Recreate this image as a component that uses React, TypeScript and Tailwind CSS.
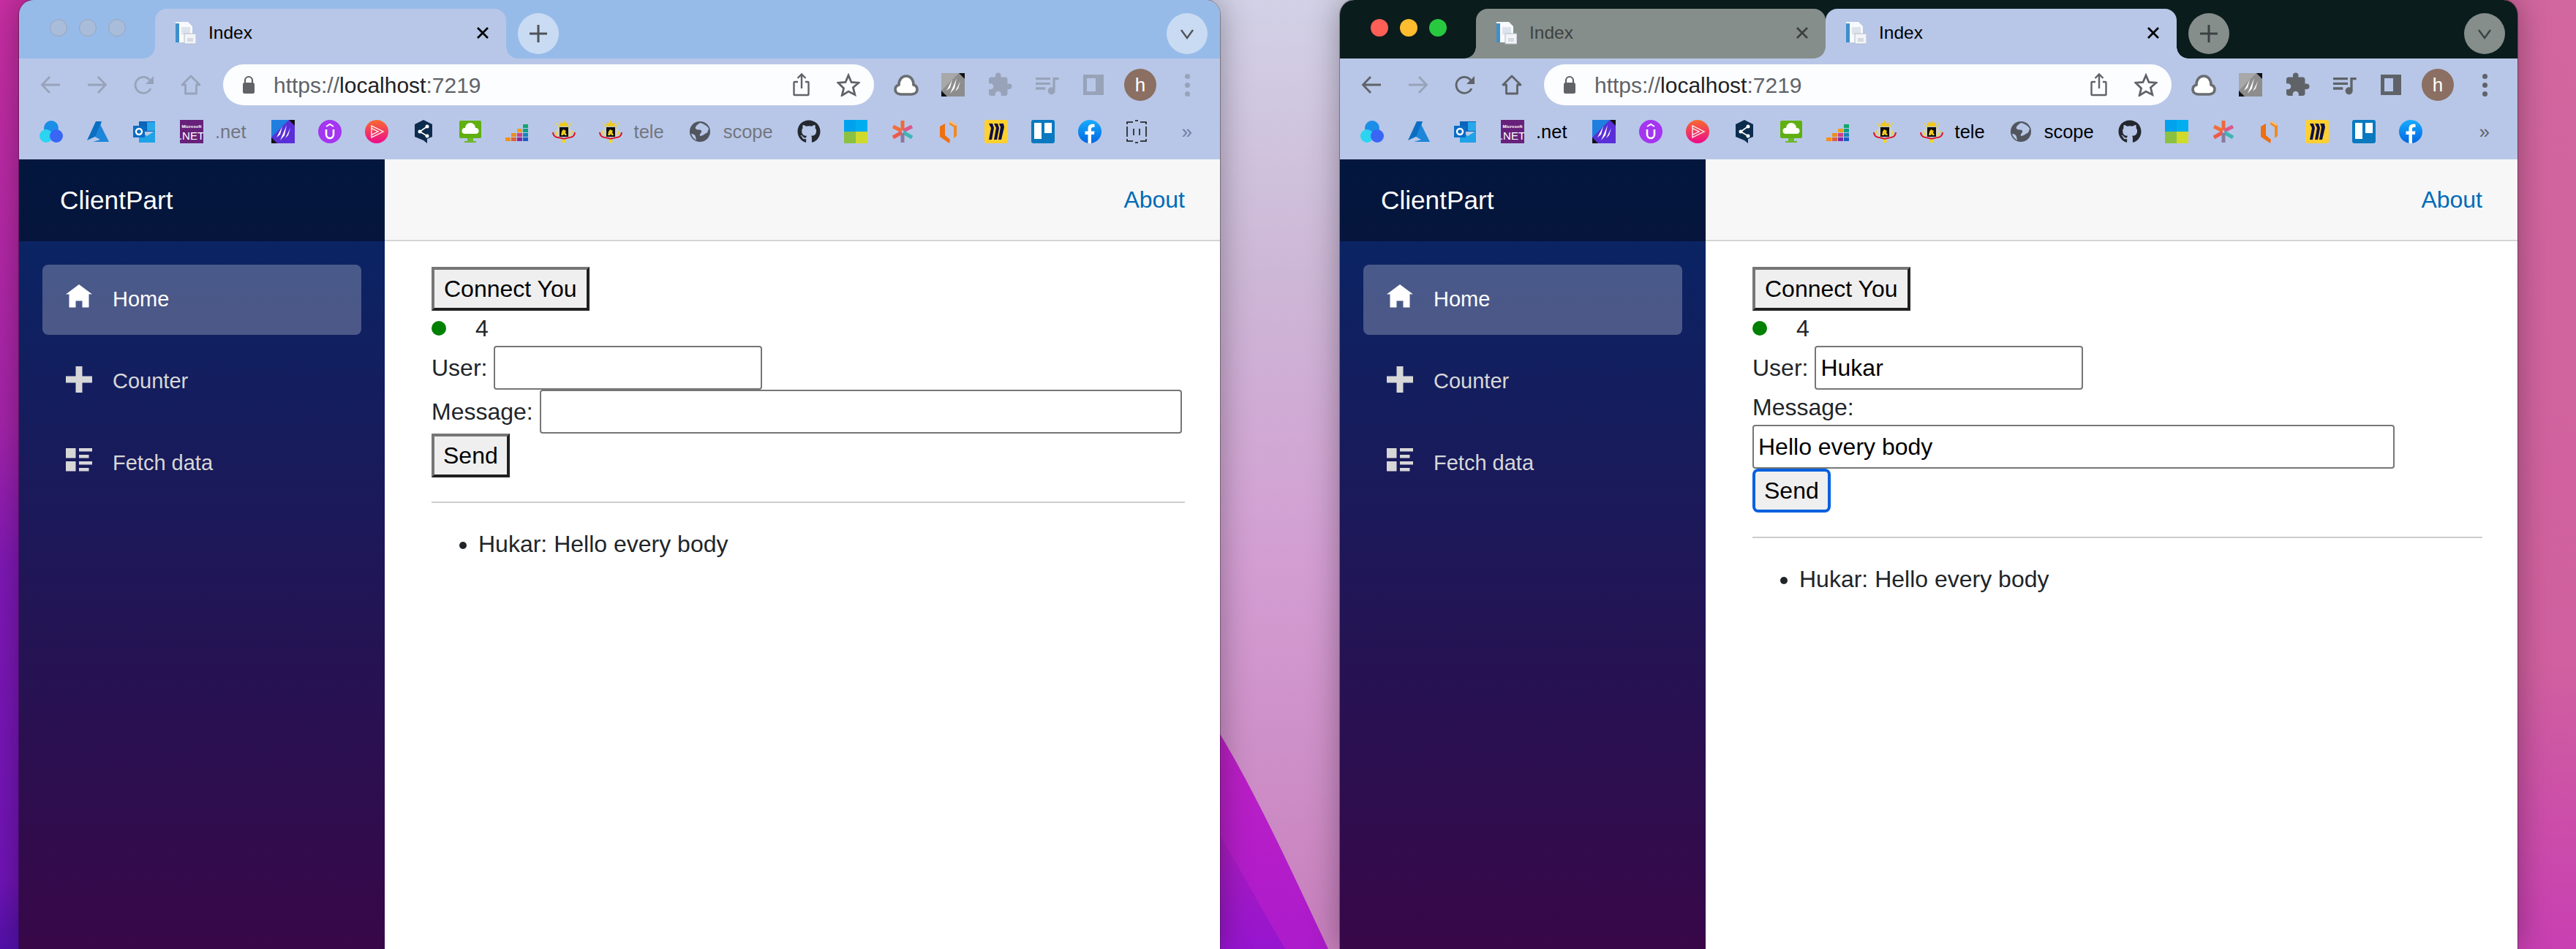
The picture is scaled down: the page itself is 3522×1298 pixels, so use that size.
import type { ReactNode } from 'react';
import { FaGithub } from 'react-icons/fa';
import { MdExtension, MdQueueMusic } from 'react-icons/md';

// favicons, all drawn in a 32x32 box
const Svg = ({ children, className = 'w-8 h-8 shrink-0' }: { children: ReactNode; className?: string }) => (
  <svg viewBox="0 0 32 32" className={className}>
    {children}
  </svg>
);

const DocIcon = () => (
  <Svg>
    <path d="M4 1h17l6 6v22H4z" fill="#f7f9fc" />
    <rect x="4" y="3" width="5" height="26" fill="#3f8fca" />
    <rect x="12" y="8" width="12" height="10" fill="#dde3ec" />
    <rect x="16" y="17" width="16" height="14" fill="#f2f4f7" stroke="#b4bbc6" />
    <rect x="20" y="23" width="8" height="5" fill="#d5dae2" />
  </Svg>
);

const Cloud3 = () => (
  <Svg>
    <circle cx="16" cy="11" r="10" fill="#1b8ee8" />
    <circle cx="9" cy="22" r="9" fill="#2bd4f0" />
    <circle cx="23" cy="22" r="9" fill="#3a66f5" />
  </Svg>
);

const Azure = () => (
  <Svg>
    <path d="M13 2h8l-7 20-13 6z" fill="#0a6fc2" />
    <path d="M19 6l12 24H9l10-3-7-4z" fill="#1d86d8" />
  </Svg>
);

const Outlook = () => (
  <Svg>
    <rect x="8" y="2" width="22" height="14" fill="#0a64b8" />
    <rect x="19" y="3" width="11" height="12" fill="#28a8ea" />
    <path d="M8 15l11 7 11-7v16H8z" fill="#1fa2e6" />
    <rect x="0" y="8" width="16" height="16" fill="#0a6cc4" />
    <circle cx="8" cy="16" r="4" fill="none" stroke="#fff" strokeWidth="2.4" />
  </Svg>
);

const DotNet = () => (
  <Svg>
    <rect width="32" height="32" fill="#68217a" />
    <text x="16" y="11" textAnchor="middle" fontSize="6" fontWeight="700" fill="#fff" fontFamily="Liberation Sans, sans-serif">Microsoft</text>
    <text x="16" y="27" textAnchor="middle" fontSize="15" fill="#fff" fontFamily="Liberation Sans, sans-serif">.NET</text>
  </Svg>
);

const Slashes = ({ grey }: { grey?: boolean }) => (
  <Svg>
    <rect width="32" height="32" fill="#111" />
    <path d="M0 0h24l8 8v24H8l-8-8z" fill={grey ? '#8d8d8d' : '#5a2fd8'} />
    <path d="M0 0h24L0 24z" fill={grey ? '#a8a8a8' : '#1f7fe0'} />
    <path d="M7 24l8-15-3 11zM12 28l9-21-3 14zM19 25l7-14-3 10z" fill="#fff" />
  </Svg>
);

const Udemy = () => (
  <Svg>
    <circle cx="16" cy="16" r="16" fill="#a435f0" />
    <path d="M11 9l5-3 5 3" fill="none" stroke="#fff" strokeWidth="2" />
    <path d="M11 13v7a5 5 0 0010 0v-7" fill="none" stroke="#fff" strokeWidth="2.6" />
  </Svg>
);

const Plural = () => (
  <Svg>
    <defs>
      <linearGradient id="pl" x1="0" y1="0" x2="0" y2="1">
        <stop offset="0" stopColor="#f96a2e" />
        <stop offset="1" stopColor="#ec0a8c" />
      </linearGradient>
    </defs>
    <circle cx="16" cy="16" r="16" fill="url(#pl)" />
    <path d="M9 8l16 8-16 8zM9 11.500l9 4.500-9 4.500" fill="none" stroke="#fff" strokeWidth="1.300" />
  </Svg>
);

const DeepSource = () => (
  <Svg>
    <path d="M16 0l12 6v17l-7 3v6l-5-4-12-5V6z" fill="#0b2c4d" />
    <path d="M11 16l10-7M11 16l10 6" stroke="#fff" strokeWidth="1.600" />
    <circle cx="11" cy="16" r="2.500" fill="#fff" />
    <circle cx="21" cy="9" r="2.500" fill="#fff" />
    <circle cx="21" cy="22" r="2.500" fill="#fff" />
  </Svg>
);

const CloudMonitor = () => (
  <Svg>
    <rect x="1" y="1" width="30" height="24" rx="2" fill="#5fb010" />
    <rect x="12" y="25" width="8" height="4" fill="#6eb82a" />
    <rect x="8" y="29" width="16" height="2" fill="#6eb82a" />
    <path d="M8 19a4 4 0 011-8 7 7 0 0114 0 4 4 0 011 8z" fill="#fff" />
  </Svg>
);

const Deezer = () => {
  const cells: [number, number, string][] = [
    [24, 6, '#10a86a'], [24, 12, '#10a08a'], [24, 18, '#1585b8'], [24, 24, '#1a5cc8'],
    [16, 12, '#e8a020'], [16, 18, '#d0408a'], [16, 24, '#7a2aa8'],
    [8, 18, '#e89020'], [8, 24, '#e0603a'], [0, 24, '#f59018'],
  ];
  return (
    <Svg>
      {cells.map(([x, y, c]) => (
        <rect key={`${x}-${y}`} x={x} y={y} width="7" height="5" fill={c} />
      ))}
    </Svg>
  );
};

const Arms = () => (
  <Svg>
    <path d="M5 4l5 7M27 4l-5 7" stroke="#e8d24a" strokeWidth="1.500" />
    <path d="M10 9l1-6 3 2 2-5 2 5 3-2 1 6z" fill="#f0c81e" />
    <path d="M5 14l5-4h12l5 4v9H5z" fill="#cfd0c8" />
    <rect x="10" y="10" width="12" height="13" fill="#0d0d0d" />
    <path d="M12 21l1-5 2-3 4 2-1 2 2 4h-3l-1-2-1 2z" fill="#f0cc1e" />
    <path d="M1 17c1 9 8 6 15 9 7-3 14 0 15-9" fill="none" stroke="#e0101c" strokeWidth="2" />
    <path d="M4 15l3 6M28 15l-3 6" stroke="#f0d81e" strokeWidth="1.500" />
    <circle cx="16" cy="29" r="2.500" fill="#f0d81e" />
  </Svg>
);

const Globe = () => (
  <Svg>
    <circle cx="16" cy="16" r="14" fill="#51565e" />
    <path d="M16 4c-4 3-7 5-6 8 3 3 7 0 8 3s-3 3-2 7c4 0 6-3 9-4 2-1 2-4 3-6-2-4-7-7-12-8z" fill="#b8c7e8" />
    <path d="M4 19c3 0 5 1 6 4l1 5c-3-2-6-5-7-9z" fill="#b8c7e8" />
  </Svg>
);

const MsTiles = () => (
  <Svg>
    <rect width="16" height="16" fill="#00a2ed" />
    <rect x="16" width="16" height="16" fill="#00aef0" />
    <rect y="16" width="16" height="16" fill="#8bc141" />
    <rect x="16" y="16" width="16" height="16" fill="#d0da2c" />
  </Svg>
);

const Star8 = () => (
  <Svg>
    <path d="M16 1v13" stroke="#ee6a3a" strokeWidth="5" />
    <path d="M3 9l12 6" stroke="#f0703a" strokeWidth="5" />
    <path d="M29 9l-12 6" stroke="#d95a8a" strokeWidth="5" />
    <path d="M3 24l12-7" stroke="#ee5a4a" strokeWidth="5" />
    <path d="M29 24l-12-7" stroke="#3fb5b5" strokeWidth="5" />
    <path d="M16 18v13" stroke="#8a7aa0" strokeWidth="5" />
  </Svg>
);

const Bracket = () => (
  <Svg>
    <path d="M17 1l9 6v15l-4 3V10l-6-4z" fill="#f08a20" />
    <path d="M3 9l7-4v16l7 6-1 5-13-9z" fill="#ee7010" />
    <path d="M17 1l9 6-2 1-8-5z" fill="#fbc078" />
  </Svg>
);

const Miro = () => (
  <Svg>
    <rect width="32" height="32" rx="3" fill="#ffd02f" />
    <path d="M6 5h5l2 6-3 16H6l3-16zM13 5h5l2 6-3 16h-4l3-16zM20 5h6l1 5-4 17h-4l3-17z" fill="#0d0f45" />
  </Svg>
);

const Trello = () => (
  <Svg>
    <rect width="32" height="32" rx="3" fill="#0a79bf" />
    <rect x="4" y="4" width="10" height="22" fill="#fff" />
    <rect x="18" y="4" width="10" height="14" fill="#fff" />
  </Svg>
);

const Facebook = () => (
  <Svg>
    <defs>
      <linearGradient id="fb" x1="0" y1="0" x2="0" y2="1">
        <stop offset="0" stopColor="#18acfe" />
        <stop offset="1" stopColor="#0165e1" />
      </linearGradient>
    </defs>
    <circle cx="16" cy="16" r="16" fill="url(#fb)" />
    <path d="M13.500 32V20H9.500v-4.500h4V12c0-4 2.400-6.200 6-6.200 1.700 0 3 .2 3 .2v4h-2c-2 0-2.500 1.200-2.500 2.400v3.100h4.500l-.7 4.500h-3.800v12z" fill="#fff" />
  </Svg>
);

const Brackets = () => (
  <Svg>
    <path d="M3 6V3h8M21 3h8v3M3 26v3h8M21 29h8v-3M3 9v14M29 9v14M12 12v9M20 12v9M14 1h4M14 31h4" fill="none" stroke="#111" strokeWidth="1.500" />
  </Svg>
);

const Github = () => <FaGithub className="w-8 h-8 shrink-0 text-[#24292f]" />;

function BookmarkIcon({ children }: { children: ReactNode }) {
  return <div className="w-16 shrink-0 flex justify-center">{children}</div>;
}

function BookmarkLink({ icon, label, active, end }: { icon: ReactNode; label: string; active: boolean; end: string }) {
  return (
    <div className={`flex items-center gap-4 pl-4 shrink-0 ${end}`}>
      {icon}
      <span className={`text-[25.5px] leading-8 ${active ? 'text-black' : 'text-[#72767e]'}`}>{label}</span>
    </div>
  );
}

function BookmarkBar({ active }: { active: boolean }) {
  return (
    <div className="h-[66px] pt-3 pl-3 flex items-start bg-[#b8c7e8]">
      <BookmarkIcon><Cloud3 /></BookmarkIcon>
      <BookmarkIcon><Azure /></BookmarkIcon>
      <BookmarkIcon><Outlook /></BookmarkIcon>
      <BookmarkLink icon={<DotNet />} label=".net" active={active} end="pr-[18px]" />
      <BookmarkIcon><Slashes /></BookmarkIcon>
      <BookmarkIcon><Udemy /></BookmarkIcon>
      <BookmarkIcon><Plural /></BookmarkIcon>
      <BookmarkIcon><DeepSource /></BookmarkIcon>
      <BookmarkIcon><CloudMonitor /></BookmarkIcon>
      <BookmarkIcon><Deezer /></BookmarkIcon>
      <BookmarkIcon><Arms /></BookmarkIcon>
      <BookmarkLink icon={<Arms />} label="tele" active={active} end="pr-[17px]" />
      <BookmarkLink icon={<Globe />} label="scope" active={active} end="pr-[17px]" />
      <BookmarkIcon><Github /></BookmarkIcon>
      <BookmarkIcon><MsTiles /></BookmarkIcon>
      <BookmarkIcon><Star8 /></BookmarkIcon>
      <BookmarkIcon><Bracket /></BookmarkIcon>
      <BookmarkIcon><Miro /></BookmarkIcon>
      <BookmarkIcon><Trello /></BookmarkIcon>
      <BookmarkIcon><Facebook /></BookmarkIcon>
      {!active && <BookmarkIcon><Brackets /></BookmarkIcon>}
      <span className={`ml-auto mr-[38px] text-[26px] leading-8 ${active ? 'text-[#5f6368]' : 'text-[#6f7f9f]'}`}>»</span>
    </div>
  );
}

function CloseGlyph({ color }: { color: string }) {
  return (
    <svg viewBox="0 0 16 16" className={`w-4 h-4 ml-auto mr-6 ${color}`}>
      <path d="M1 1l14 14M15 1L1 15" stroke="currentColor" strokeWidth="2.800" />
    </svg>
  );
}

function TabStrip({ active }: { active: boolean }) {
  const circle = active ? 'bg-[#868e8b] text-[#3c4043]' : 'bg-[#c9dbf3] text-[#4f5358]';
  return (
    <div className={`h-20 flex shrink-0 ${active ? 'bg-[#0a1c1c]' : 'bg-[#97bbe9]'}`}>
      <div className="w-[186px] shrink-0 pl-[42px] pt-[26px] flex gap-4">
        <span className={`w-6 h-6 rounded-full ${active ? 'bg-[#ff5f57]' : 'bg-[#a9bcd9] border border-[#97a5bd]'}`} />
        <span className={`w-6 h-6 rounded-full ${active ? 'bg-[#febc2e]' : 'bg-[#a9bcd9] border border-[#97a5bd]'}`} />
        <span className={`w-6 h-6 rounded-full ${active ? 'bg-[#28c840]' : 'bg-[#a9bcd9] border border-[#97a5bd]'}`} />
      </div>
      {active && (
        <div className="relative mt-3 h-[68px] w-[478px] shrink-0 rounded-t-2xl bg-[#868e8b] flex items-center pl-6 gap-[17px] pb-[2px]">
          <span className="absolute -left-4 bottom-0 w-4 h-4 bg-[radial-gradient(circle_at_0_0,transparent_15.500px,#868e8b_16px)]" />
          <DocIcon />
          <span className="text-[24.500px] text-[#3d4140]">Index</span>
          <CloseGlyph color="text-[#3d4140]" />
        </div>
      )}
      <div className="relative mt-3 h-[68px] w-[480px] shrink-0 rounded-t-2xl bg-[#b8c7e8] flex items-center pl-6 gap-[17px] pb-[2px]">
        <span className="absolute -left-4 bottom-0 w-4 h-4 bg-[radial-gradient(circle_at_0_0,transparent_15.500px,#b8c7e8_16px)]" />
        <span className="absolute -right-4 bottom-0 w-4 h-4 bg-[radial-gradient(circle_at_100%_0,transparent_15.500px,#b8c7e8_16px)]" />
        <DocIcon />
        <span className="text-[24.500px] text-black">Index</span>
        <CloseGlyph color="text-black" />
      </div>
      <div className={`ml-4 mt-[18px] w-14 h-14 rounded-full flex items-center justify-center ${circle}`}>
        <svg viewBox="0 0 24 24" className="w-6 h-6">
          <path d="M12 0v24M0 12h24" stroke="currentColor" strokeWidth="3" />
        </svg>
      </div>
      <div className={`ml-auto mr-[17px] mt-[18px] w-14 h-14 rounded-full flex items-center justify-center ${circle}`}>
        <svg viewBox="0 0 20 20" className="w-5 h-5">
          <path d="M2 5l8 11 8-11" fill="none" stroke="currentColor" strokeWidth="2.400" />
        </svg>
      </div>
    </div>
  );
}

function ToolCell({ children, className = '' }: { children: ReactNode; className?: string }) {
  return <div className={`w-16 h-14 shrink-0 flex items-center justify-center ${className}`}>{children}</div>;
}

function Toolbar({ active }: { active: boolean }) {
  const tone = active ? 'text-[#5f6368]' : 'text-[#98a3b9]';
  return (
    <div className="h-[72px] pt-2 pl-[11px] pr-[13px] flex items-start bg-[#b8c7e8] shrink-0">
      <ToolCell className={tone}>
        <svg viewBox="0 0 28 28" className="w-7 h-7">
          <path d="M27 14H3M13 3L2.500 14 13 25" fill="none" stroke="currentColor" strokeWidth="2.800" />
        </svg>
      </ToolCell>
      <ToolCell className="text-[#98a3b9]">
        <svg viewBox="0 0 28 28" className="w-7 h-7">
          <path d="M1 14h24M15 3l10.500 11L15 25" fill="none" stroke="currentColor" strokeWidth="2.800" />
        </svg>
      </ToolCell>
      <ToolCell className={tone}>
        <svg viewBox="0 0 28 28" className="w-7 h-7">
          <path d="M23 19a11 11 0 11-1-11" fill="none" stroke="currentColor" strokeWidth="2.800" />
          <path d="M27 2v11H16z" fill="currentColor" />
        </svg>
      </ToolCell>
      <ToolCell className={tone}>
        <svg viewBox="0 0 28 28" className="w-7 h-7">
          <path d="M14 2L2 14h4.500v12h15V14H26z" fill="none" stroke="currentColor" strokeWidth="2.800" strokeLinejoin="round" />
        </svg>
      </ToolCell>
      <div className="ml-3 mr-3 h-14 flex-1 rounded-full bg-[#fcfdfe] flex items-center pl-[26px] pr-[3px]">
        <svg viewBox="0 0 18 26" className="w-[18px] h-[26px] text-[#5f6368] shrink-0">
          <path d="M4 11V7a5 5 0 0110 0v4" fill="none" stroke="currentColor" strokeWidth="2.200" />
          <rect x="1" y="10" width="16" height="15" rx="2.500" fill="currentColor" />
        </svg>
        <span className="ml-[25px] text-[30px] text-[#5f6368]">
          https://<span className="text-[#202124]">localhost</span>:7219
        </span>
        <ToolCell className="ml-auto text-[#5f6368]">
          <svg viewBox="0 0 24 32" className="w-6 h-8">
            <path d="M7 12H2.500a1 1 0 00-1 1v16a1 1 0 001 1h18a1 1 0 001-1V13a1 1 0 00-1-1H17M12 21V2M6.500 7L12 1.500 17.500 7" fill="none" stroke="currentColor" strokeWidth="2.400" />
          </svg>
        </ToolCell>
        <ToolCell className="text-[#5f6368]">
          <svg viewBox="0 0 32 32" className="w-8 h-8">
            <path d="M16 3l4 9.500 10 .7-7.600 6.500 2.400 9.800L16 25l-8.800 5.500 2.400-9.800L2 13.200l10-.7z" fill="none" stroke="currentColor" strokeWidth="2.800" />
          </svg>
        </ToolCell>
      </div>
      <ToolCell className="text-[#6a6e72]">
        <svg viewBox="0 0 34 32" className="w-[34px] h-8">
          <path d="M10 29c-4 0-8-2-8-7 0-3 2-5 5-6 0-7 4-12 10-12s10 5 10 12c3 1 5 3 5 6 0 5-4 7-8 7z" fill="#fff" stroke="currentColor" strokeWidth="3.600" />
        </svg>
      </ToolCell>
      <ToolCell><Slashes grey /></ToolCell>
      <ToolCell className={tone}>
        <MdExtension className="w-9 h-9" />
      </ToolCell>
      <ToolCell className={tone}>
        <MdQueueMusic className="w-10 h-10" />
      </ToolCell>
      <ToolCell className={tone}>
        <span className="w-7 h-7 border-[5px] border-r-[11px] border-current" />
      </ToolCell>
      <ToolCell>
        <span className="w-11 h-11 rounded-full bg-[#8b6f62] text-white text-[26px] flex items-center justify-center">h</span>
      </ToolCell>
      <ToolCell className={tone}>
        <span className="flex flex-col gap-[5px]">
          <span className="w-[7px] h-[7px] rounded-full bg-current" />
          <span className="w-[7px] h-[7px] rounded-full bg-current" />
          <span className="w-[7px] h-[7px] rounded-full bg-current" />
        </span>
      </ToolCell>
    </div>
  );
}

function NavItem({ label, path, selected }: { label: string; path: string; selected?: boolean }) {
  return (
    <a
      href="#"
      className={`mx-8 mb-4 h-24 rounded-lg flex items-center pl-8 text-[29px] ${
        selected ? 'bg-white/25 text-white' : 'text-[#d7d7d7]'
      }`}
    >
      <span className="w-16 shrink-0">
        <svg viewBox="0 0 8 8" className="w-9 h-9 -mt-[6px] fill-current">
          <path d={path} />
        </svg>
      </span>
      {label}
    </a>
  );
}

function Sidebar() {
  return (
    <div className="w-[500px] shrink-0 bg-[linear-gradient(180deg,#052767_0%,#3a0647_104%)]">
      <div className="h-28 bg-black/40 flex items-center pl-[56px] text-[35.200px] text-white">ClientPart</div>
      <nav className="pt-8 flex flex-col">
        <NavItem label="Home" selected path="M4 0l-4 3h1v4h2v-2h2v2h2v-4.030l1 .03-4-3z" />
        <NavItem label="Counter" path="M3 0v3h-3v2h3v3h2v-3h3v-2h-3v-3h-2z" />
        <NavItem
          label="Fetch data"
          path="M0 0v3h3v-3h-3zm4 0v1h4v-1h-4zm0 2v1h3v-1h-3zm-4 2v3h3v-3h-3zm4 0v1h4v-1h-4zm0 2v1h3v-1h-3z"
        />
      </nav>
    </div>
  );
}

const inputClass =
  'h-[60px] border-2 border-[#767676] rounded-[4px] bg-white px-[6px] text-[32px] text-black outline-none';

const plainButton =
  'block h-[60px] border-4 border-t-[#767676] border-l-[#767676] border-r-[#1f1f1f] border-b-[#1f1f1f] bg-[#efefef] text-black';

function ChatPage({ filled }: { filled: boolean }) {
  return (
    <main className="flex-1 min-w-0 bg-white text-[32px] leading-[48px] text-[#212529]">
      <div className="h-28 bg-[#f7f7f7] border-b-2 border-[#d6d5d5] flex items-center justify-end pr-12">
        <a href="#" className="text-[#006bb7]">About</a>
      </div>
      <div className="pl-16 pr-12 pt-[35px]">
        <button className={`${plainButton} px-[13px]`}>Connect You</button>
        <div className="h-12 flex items-center">
          <span className="w-5 h-5 rounded-full bg-[#008000]" />
          <span className="ml-10">4</span>
        </div>
        <div className="h-[60px] flex items-center gap-[9px]">
          <label>User:</label>
          <input className={`${inputClass} w-[367px]`} defaultValue={filled ? 'Hukar' : ''} />
        </div>
        {filled ? (
          <>
            <div className="h-12">Message:</div>
            <input className={`${inputClass} block w-[878px]`} defaultValue="Hello every body" />
          </>
        ) : (
          <div className="h-[60px] flex items-center gap-[9px]">
            <label>Message:</label>
            <input className={`${inputClass} w-[878px]`} />
          </div>
        )}
        {filled ? (
          <button className="block h-[60px] px-3 border-4 border-[#0060df] rounded-lg bg-[#efefef] text-black">Send</button>
        ) : (
          <button className={`${plainButton} px-3`}>Send</button>
        )}
        <hr className="mt-[33px] mb-8 border-t-2 border-[#cdcdcd]" />
        <ul className="list-disc pl-16">
          <li>Hukar: Hello every body</li>
        </ul>
      </div>
    </main>
  );
}

function BrowserWindow({ active, width, margin }: { active: boolean; width: string; margin: string }) {
  return (
    <div
      className={`relative h-full flex flex-col overflow-hidden rounded-t-[20px] font-['Liberation_Sans',Arial,sans-serif] ring-1 ring-black/30 shadow-[0_0_44px_rgba(0,0,0,0.35)] ${width} ${margin}`}
    >
      <TabStrip active={active} />
      <Toolbar active={active} />
      <BookmarkBar active={active} />
      <div className="flex flex-1 min-h-0">
        <Sidebar />
        <ChatPage filled={active} />
      </div>
    </div>
  );
}

function Wallpaper() {
  return (
    <svg viewBox="0 0 3522 1298" className="absolute inset-0 w-full h-full">
      <defs>
        <linearGradient id="wl" x1="0" y1="0" x2="0" y2="1">
          <stop offset="0" stopColor="#c82ea2" />
          <stop offset="0.45" stopColor="#a424aa" />
          <stop offset="0.6" stopColor="#7f18b6" />
          <stop offset="0.93" stopColor="#7014b6" />
          <stop offset="1" stopColor="#5210a8" />
        </linearGradient>
        <linearGradient id="wm" x1="0" y1="0" x2="0" y2="1">
          <stop offset="0" stopColor="#d2d1e6" />
          <stop offset="0.3" stopColor="#cdb6d6" />
          <stop offset="0.6" stopColor="#d39dd2" />
          <stop offset="1" stopColor="#c880bd" />
        </linearGradient>
        <linearGradient id="wr" x1="0" y1="0" x2="0" y2="1">
          <stop offset="0" stopColor="#d2669e" />
          <stop offset="0.7" stopColor="#d0609f" />
          <stop offset="1" stopColor="#c83fb2" />
        </linearGradient>
        <linearGradient id="wb" x1="0" y1="0" x2="0" y2="1">
          <stop offset="0" stopColor="#bc20c4" />
          <stop offset="1" stopColor="#ad1bcc" />
        </linearGradient>
        <linearGradient id="wp" x1="0" y1="0" x2="0" y2="1">
          <stop offset="0" stopColor="#ab1cc0" />
          <stop offset="1" stopColor="#9615cf" />
        </linearGradient>
      </defs>
      <rect width="1000" height="1298" fill="url(#wl)" />
      <rect x="1000" width="1500" height="1298" fill="url(#wm)" />
      <rect x="2500" width="1022" height="1298" fill="url(#wr)" />
      <path d="M1668 1004C1720 1090 1770 1200 1816 1298H1400V1004z" fill="url(#wb)" />
      <path d="M1668 1142L1757 1298H1400V1142z" fill="url(#wp)" />
    </svg>
  );
}

export default function App() {
  return (
    <div className="relative w-[3522px] h-[1298px] overflow-hidden flex">
      <Wallpaper />
      <BrowserWindow active={false} width="w-[1642px]" margin="ml-[26px]" />
      <BrowserWindow active width="w-[1610px]" margin="ml-[164px]" />
    </div>
  );
}
